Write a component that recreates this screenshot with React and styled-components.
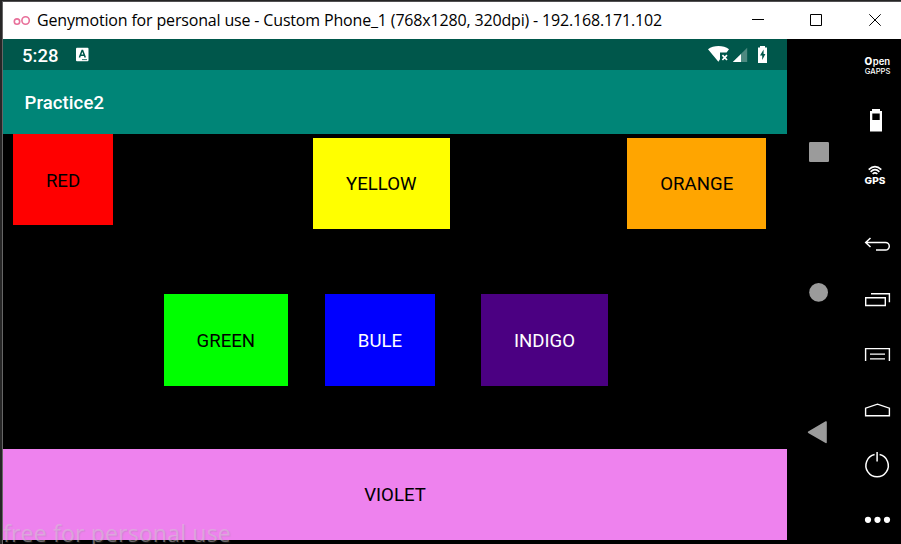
import React from "react";
import styled, { createGlobalStyle } from "styled-components";

const GlobalStyle = createGlobalStyle`
  * { box-sizing: border-box; }
  body { margin: 0; background: #000; overflow: hidden; }
`;

const Window = styled.div`
  position: relative;
  width: 901px;
  height: 544px;
  overflow: hidden;
  display: flex;
  flex-direction: column;
  background: #000;
  border-top: 1px solid #242424;
  border-left: 2px solid #262626;
`;

const Frame = styled.div`
  flex: 1;
  min-height: 0;
  display: flex;
  flex-direction: column;
  border-top: 1px solid #515052;
  border-left: 1px solid #666;
`;

const TitleBar = styled.header`
  height: 37px;
  flex: none;
  display: flex;
  align-items: center;
  background: #fff;
  padding-left: 10px;
`;

const Title = styled.h1`
  margin: 0 auto 0 6px;
  padding-bottom: 2px;
  font: 400 16px/22px "Open Sans", sans-serif;
  letter-spacing: ${(p) => p.$tracking}px;
  white-space: nowrap;
  color: #000;
`;

const WindowButtons = styled.div`
  display: flex;
  height: 37px;
`;

const Body = styled.div`
  flex: 1;
  min-height: 0;
  display: flex;
`;

const Phone = styled.main`
  width: 784px;
  display: flex;
  flex-direction: column;
  font-family: Roboto, sans-serif;
`;

const StatusBar = styled.div`
  height: 31px;
  display: flex;
  align-items: center;
  background: #00574b;
  padding-left: 19px;
  color: #fff;
`;

const Clock = styled.span`
  width: 54px;
  padding-top: 2px;
  font-size: 18.5px;
  line-height: 22px;
  font-weight: 500;
`;

const StatusIcons = styled.div`
  display: flex;
  margin-left: auto;
`;

const AppBar = styled.div`
  height: 64px;
  display: flex;
  align-items: center;
  padding: 2px 0 0 21.5px;
  background: #008577;
  color: #fff;
  font-size: 18.5px;
  line-height: 22px;
  letter-spacing: 0.1px;
  font-weight: 500;
`;

const Canvas = styled.div`
  height: 406px;
  display: flex;
  flex-direction: column;
`;

const TileRow = styled.div`
  display: flex;
  align-items: flex-start;
  height: ${(p) => p.$height}px;
`;

const Tile = styled.div`
  width: ${(p) => p.$width}px;
  height: 91.4px;
  margin-left: ${(p) => p.$gap || 0}px;
  margin-top: ${(p) => p.$drop || 0}px;
  padding-top: 2px;
  display: flex;
  align-items: center;
  justify-content: center;
  background: ${(p) => p.$fill};
  color: ${(p) => p.$ink || "#000"};
  font-size: 18.6px;
  line-height: 22px;
`;

const NavColumn = styled.nav`
  width: 64px;
  display: flex;
  flex-direction: column;
`;

const ToolColumn = styled.aside`
  width: 50px;
  display: flex;
  flex-direction: column;
`;

const Art = styled.svg`
  display: block;
  flex: none;
  margin-top: ${(p) => p.$gap || 0}px;
`;

const Watermark = styled.div`
  position: absolute;
  left: 1px;
  bottom: -5px;
  font: 400 23px/32px "Open Sans", sans-serif;
  letter-spacing: ${(p) => p.$tracking}px;
  white-space: nowrap;
  color: rgba(210, 205, 210, 0.48);
  text-shadow: 1px 1px 1px rgba(130, 130, 130, 0.2);
`;

/* Drawing whose inner coordinates are those of the whole window. */
function Icon({ x, y, w, h, gap, children }) {
  return (
    <Art width={w} height={h} viewBox={`${x} ${y} ${w} ${h}`} $gap={gap} fill="none">
      {children}
    </Art>
  );
}

const tiles = [
  {
    height: 160.3,
    items: [
      { name: "RED", fill: "#ff0000", width: 100, gap: 10 },
      { name: "YELLOW", fill: "#ffff00", width: 136.6, gap: 200, drop: 3.7 },
      { name: "ORANGE", fill: "#ffa500", width: 138.6, gap: 177.9, drop: 3.7 },
    ],
  },
  {
    height: 154.3,
    items: [
      { name: "GREEN", fill: "#00ff00", width: 124.3, gap: 160.7 },
      { name: "BULE", fill: "#0000ff", ink: "#fff", width: 110, gap: 37 },
      { name: "INDIGO", fill: "#4b0082", ink: "#fff", width: 127, gap: 46 },
    ],
  },
  { height: 91.4, items: [{ name: "VIOLET", fill: "#ee82ee", width: 784 }] },
];

export default function App() {
  return (
    <>
      <GlobalStyle />
      <Window>
        <Frame>
          <TitleBar>
            <Icon x={13} y={10} w={18} h={20}>
              <g stroke="#e8709a" strokeWidth="1.6">
                <circle cx="17" cy="20.6" r="2.7" />
                <circle cx="25.6" cy="19.5" r="3.7" />
              </g>
            </Icon>
            <Title $tracking={-0.165}>
              Genymotion for personal use - Custom Phone_1 (768x1280, 320dpi) - 192.168.171.102
            </Title>
            <WindowButtons>
              <Icon x={740} y={2} w={161} h={37}>
                <g stroke="#000" strokeWidth="1">
                  <path d="M752 19.5h12" />
                  <path d="M810.5 14.5h11v11h-11z" />
                  <path d="M869.3 14.3l11.4 11.4M880.7 14.3l-11.4 11.4" />
                </g>
              </Icon>
            </WindowButtons>
          </TitleBar>
          <Body>
            <Phone>
              <StatusBar>
                <Clock>5:28</Clock>
                <Icon x={76} y={47} w={14} h={15}>
                  <rect x="76" y="47.7" width="12.5" height="13.5" rx="1" fill="#fff" />
                  <path d="M79.4 57.6l2.7-7.2h.5l2.7 7.2M80.4 55.3h4" stroke="#00574b" strokeWidth="1.5" />
                  <path d="M82 59.6h5" stroke="#00574b" strokeWidth=".8" />
                </Icon>
                <StatusIcons>
                  <Icon x={706} y={39} w={81} h={31}>
                    <path d="M708 49.2C713.5 44.8 723.5 44.8 729 49.2L726.6 52.6H720v6.6l-1.6 2.6z" fill="#fff" />
                    <path d="M722.4 55.2l4.6 4.8M727 55.2l-4.6 4.8" stroke="#fff" strokeWidth="1.7" />
                    <path d="M747.2 47.7v14.3h-14.4z" fill="#4d8980" />
                    <path d="M741 53.9V62h-8.2z" fill="#fff" />
                    <path d="M760 46h5v1.6h2V63h-9V47.6h2z" fill="#fff" />
                    <path d="M763.6 49.5l-3.6 6h2.2v4.5l3.2-6h-1.8z" fill="#00574b" />
                  </Icon>
                </StatusIcons>
              </StatusBar>
              <AppBar>Practice2</AppBar>
              <Canvas>
                {tiles.map((row) => (
                  <TileRow key={row.height} $height={row.height}>
                    {row.items.map((t) => (
                      <Tile key={t.name} $fill={t.fill} $ink={t.ink} $width={t.width} $gap={t.gap} $drop={t.drop}>
                        {t.name}
                      </Tile>
                    ))}
                  </TileRow>
                ))}
              </Canvas>
            </Phone>
            <NavColumn>
              <Icon x={787} y={39} w={64} h={183}>
                <rect x="809" y="142" width="20" height="20" rx="1.2" fill="#9b9b9b" />
              </Icon>
              <Icon x={787} y={222} w={64} h={140}>
                <circle cx="818.6" cy="292.4" r="9.4" fill="#9b9b9b" />
              </Icon>
              <Icon x={787} y={362} w={64} h={140}>
                <path d="M808.6 432.2L826 422v20.4z" fill="#9b9b9b" stroke="#9b9b9b" strokeWidth="1.6" strokeLinejoin="round" />
              </Icon>
            </NavColumn>
            <ToolColumn>
              <Icon x={851} y={39} w={50} h={54}>
                <g fill="#fff" fontFamily="Inter, sans-serif">
                  <text x="864.4" y="65.4" fontSize="10" fontWeight="800">O</text>
                  <text x="872.8" y="65.4" fontSize="9.4" fontWeight="600" textLength="17.4" lengthAdjust="spacingAndGlyphs">pen</text>
                  <text x="864.8" y="73.8" fontSize="7.8" fontWeight="500" textLength="25.6" lengthAdjust="spacingAndGlyphs">GAPPS</text>
                </g>
              </Icon>
              <Icon x={851} y={93} w={50} h={54}>
                <path fillRule="evenodd" fill="#fff" d="M872 109h8v2h2v20.4h-12V111h2zM872.3 113.4v6.6h7.4v-6.6z" />
              </Icon>
              <Icon x={851} y={147} w={50} h={56}>
                <g stroke="#fff" strokeWidth="1.6">
                  <path d="M868.7 169.6q6.3-6 12.6 0" />
                  <path d="M870.6 171.8q4.4-4.2 8.8 0" />
                  <path d="M872.6 174q2.4-2.2 4.8 0" />
                </g>
                <text x="864.6" y="183.8" fill="#fff" fontFamily="Inter, sans-serif" fontWeight="800" fontSize="9.4" textLength="20.8" lengthAdjust="spacingAndGlyphs">
                  GPS
                </text>
              </Icon>
              <Icon x={851} y={216} w={50} h={56} gap={13}>
                <path d="M870.5 238l-4.8 4.5 4.8 4.5M866 242.5h19.5a3.8 3.8 0 0 1 0 7.6H876" stroke="#fff" strokeWidth="1.5" />
              </Icon>
              <Icon x={851} y={272} w={50} h={56}>
                <path d="M865.7 297.7h19.6v7.8h-19.6zM871 293.8h18.4v8.4" stroke="#fff" strokeWidth="1.4" />
              </Icon>
              <Icon x={851} y={328} w={50} h={54}>
                <path d="M865.6 361v-12.4h23.8V361M870 354.1h15M870 358.9h15" stroke="#fff" strokeWidth="1.4" />
              </Icon>
              <Icon x={851} y={382} w={50} h={56}>
                <path d="M865.6 415.8v-7.6l11.9-4 11.9 4v7.6z" stroke="#fff" strokeWidth="1.4" />
              </Icon>
              <Icon x={851} y={438} w={50} h={54}>
                <path d="M874.6 454.6a11.2 11.2 0 1 0 5 0M877.1 452v9.6" stroke="#fff" strokeWidth="1.5" />
              </Icon>
              <Icon x={851} y={492} w={50} h={52}>
                <g fill="#fff">
                  <circle cx="868" cy="519.8" r="3.1" />
                  <circle cx="877.5" cy="519.8" r="3.1" />
                  <circle cx="887" cy="519.8" r="3.1" />
                </g>
              </Icon>
            </ToolColumn>
          </Body>
        </Frame>
        <Watermark $tracking={0.2}>free for personal use</Watermark>
      </Window>
    </>
  );
}
